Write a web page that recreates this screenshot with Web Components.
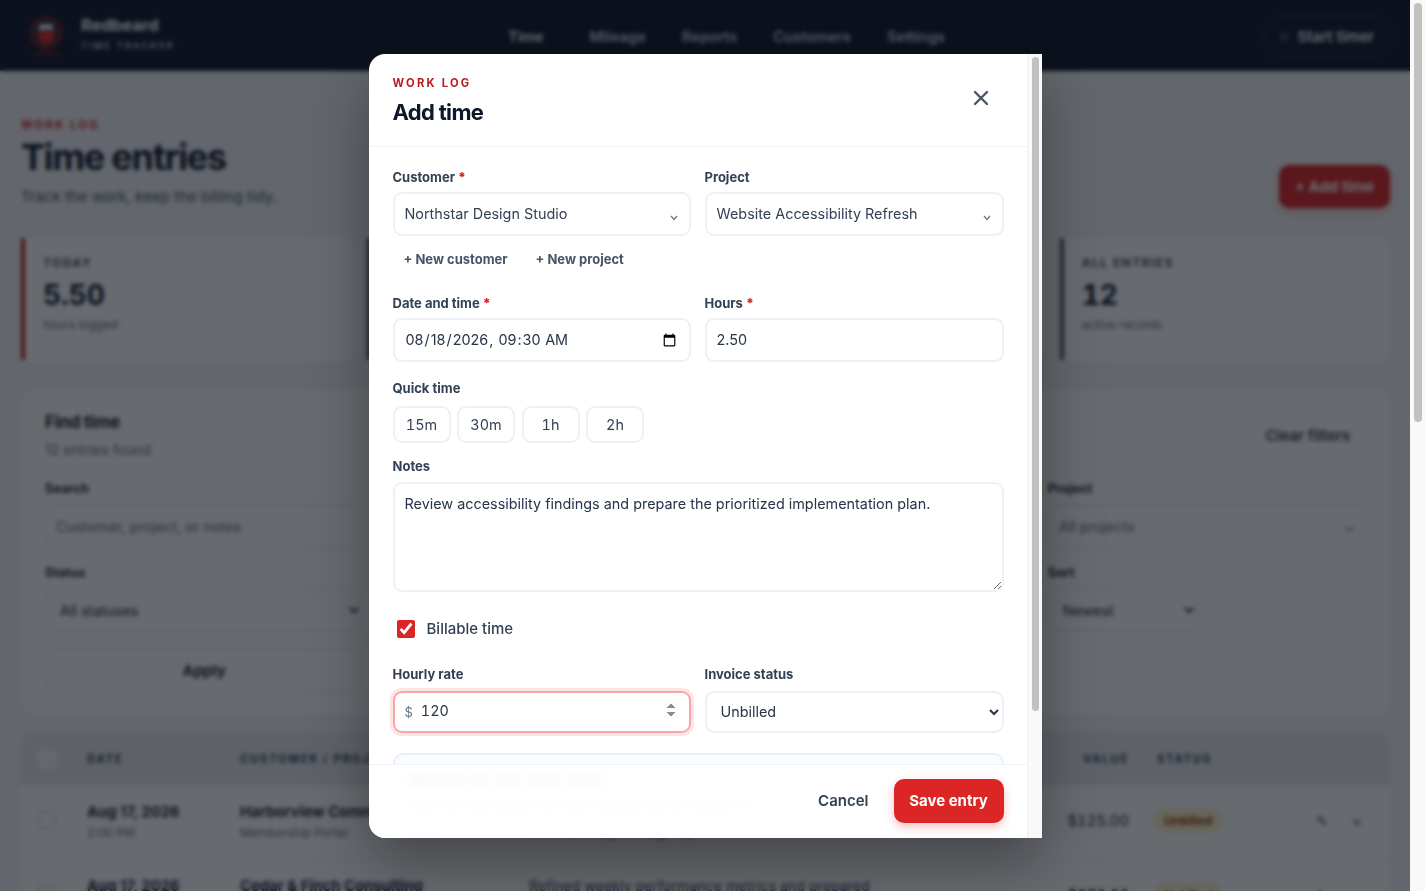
<!DOCTYPE html>
<html lang="en">
    <head>
        <meta charset="utf-8" />
        <title>Redbeard Time Tracker</title>
        <style>
            html, body {
                margin: 0;
                background: #f4f5f7;
                font-family: Inter, "Liberation Sans", sans-serif;
                color: #0f172a;
            }
            body { margin-right: 15px; }
            .page-scroll { position: fixed; top: 0; right: 0; bottom: 0; }
        </style>
    </head>
    <body>
        <app-nav></app-nav>
        <page-body>
            <page-title></page-title>
            <stat-row>
                <stat-card label="Today" value="5.50" note="hours logged" accent="#b91c1c"></stat-card>
                <stat-card label="This week" value="18.25" note="hours logged" accent="#334155"></stat-card>
                <stat-card label="Unbilled" value="$1,840" note="ready to invoice" accent="#d97706"></stat-card>
                <stat-card label="All entries" value="12" note="active records" accent="#475569"></stat-card>
            </stat-row>
            <filter-panel></filter-panel>
            <time-table></time-table>
        </page-body>
        <add-time-dialog></add-time-dialog>
        <fake-scrollbar class="page-scroll" top="3" size="419"></fake-scrollbar>

        <script>
            class FakeScrollbar extends HTMLElement {
                constructor() {
                    super();
                    this.attachShadow({ mode: "open" }).innerHTML = `<style>
                        :host { display: block; width: 15px; box-sizing: border-box; background: #f9f9fa; padding: ${this.getAttribute("top")}px 3px 0 4px; }
                        div { height: ${this.getAttribute("size")}px; background: #c1c1c1; border-radius: 4px; }
                    </style><div></div>`;
                }
            }

            class AppNav extends HTMLElement {
                constructor() {
                    super();
                    this.attachShadow({ mode: "open" }).innerHTML = `<style>
                        :host { display: flex; align-items: center; height: 71px; background: #0f172a; padding: 2px 20px 0 28px; box-sizing: border-box; color: #fff; }
                        .brand { display: flex; align-items: center; gap: 15px; width: 452px; margin-top: -8px; }
                        .name { font-size: 16.5px; font-weight: 700; line-height: 20px; }
                        .sub { font-size: 9px; font-weight: 600; letter-spacing: .25em; color: #cbd5e1; margin-top: 5px; }
                        nav { display: flex; gap: 36px; flex: 1; padding-left: 28px; }
                        nav a { font-size: 14.7px; font-weight: 600; color: #cbd5e1; }
                        nav a.on { color: #fff; margin-right: 10px; }
                        .timer { display: flex; align-items: center; gap: 9px; height: 41px; padding: 0 15px; border: 1px solid rgba(255,255,255,.14); border-radius: 21px; font-size: 15px; font-weight: 600; color: #f1f5f9; }
                        .dot { width: 6px; height: 6px; border: 1px solid #94a3b8; border-radius: 50%; }
                    </style>
                    <div class="brand">
                        <svg width="38" height="42" viewBox="0 0 38 42" style="margin-top:8px">
                            <circle cx="18" cy="17" r="15" fill="#1e293b" stroke="#b91c1c" stroke-width="2"/>
                            <path d="M9 15h18l-1 9-8 6-8-6z" fill="#dc2626"/>
                            <path d="M12 8h12l2 6H10z" fill="#e2e8f0"/>
                            <rect x="4" y="37" width="28" height="2" fill="#991b1b"/>
                        </svg>
                        <div><div class="name">Redbeard</div><div class="sub">TIME TRACKER</div></div>
                    </div>
                    <nav><a class="on">Time</a><a>Mileage</a><a>Reports</a><a>Customers</a><a>Settings</a></nav>
                    <div class="timer"><span class="dot"></span>Start timer</div>`;
                }
            }

            class PageBody extends HTMLElement {
                constructor() {
                    super();
                    this.attachShadow({ mode: "open" }).innerHTML = `<style>
                        :host { display: block; padding: 46px 20px 156px 21px; }
                    </style><slot></slot>`;
                }
            }

            class PageTitle extends HTMLElement {
                constructor() {
                    super();
                    this.attachShadow({ mode: "open" }).innerHTML = `<style>
                        :host { display: flex; justify-content: space-between; align-items: flex-end; height: 120px; box-sizing: border-box; padding-bottom: 30px; }
                        .eyebrow { font-size: 11.2px; font-weight: 700; letter-spacing: .2em; color: #dc2626; line-height: 14px; }
                        h1 { margin: 4px 0 9px; font-size: 36px; line-height: 42px; font-weight: 700; letter-spacing: -.035em; color: #0f172a; }
                        p { margin: 0; font-size: 15px; line-height: 20px; color: #475569; }
                        button { all: unset; height: 43px; width: 111px; margin-bottom: -1px; text-align: center; background: #dc2626; color: #fff; border-radius: 10px; font-size: 15px; font-weight: 700; box-shadow: 0 4px 10px rgba(220,38,38,.25); }
                    </style>
                    <div><div class="eyebrow">WORK LOG</div><h1>Time entries</h1><p>Track the work, keep the billing tidy.</p></div>
                    <button>+ Add time</button>`;
                }
            }

            class StatRow extends HTMLElement {
                constructor() {
                    super();
                    this.attachShadow({ mode: "open" }).innerHTML = `<style>
                        :host { display: grid; grid-template-columns: repeat(4, 1fr); gap: 16px; }
                    </style><slot></slot>`;
                }
            }

            class StatCard extends HTMLElement {
                constructor() {
                    super();
                    this.attachShadow({ mode: "open" }).innerHTML = `<style>
                        :host { display: flex; gap: 18px; height: 125px; box-sizing: border-box; background: #fff; border-radius: 12px; padding: 1px 0 2px; }
                        .bar { width: 4px; border-radius: 2px; background: ${this.getAttribute("accent")}; }
                        .body { padding-top: 17px; }
                        .label { font-size: 12px; font-weight: 700; letter-spacing: .12em; line-height: 16px; color: #475569; text-transform: uppercase; }
                        .value { font-size: 28px; font-weight: 700; font-variant-numeric: tabular-nums; line-height: 36px; margin-top: 6px; color: #0f172a; }
                        .note { font-size: 12px; line-height: 16px; margin-top: 4px; color: #64748b; }
                    </style>
                    <div class="bar"></div>
                    <div class="body">
                        <div class="label">${this.getAttribute("label")}</div>
                        <div class="value">${this.getAttribute("value")}</div>
                        <div class="note">${this.getAttribute("note")}</div>
                    </div>`;
                }
            }

            class FilterPanel extends HTMLElement {
                constructor() {
                    super();
                    this.attachShadow({ mode: "open" }).innerHTML = `<style>
                        :host { display: block; margin-top: 28px; height: 324px; box-sizing: border-box; background: #fff; border-radius: 14px; padding: 15px 24px; }
                        .top { display: flex; justify-content: space-between; align-items: center; height: 60px; }
                        h2 { margin: 0 0 7px; font-size: 17px; line-height: 22px; font-weight: 700; letter-spacing: -.01em; }
                        .count { font-size: 14px; line-height: 20px; color: #64748b; }
                        .clear { font-size: 15px; font-weight: 600; color: #334155; padding-right: 16px; }
                        .grid { display: grid; grid-template-columns: repeat(4, 1fr); column-gap: 16px; margin-top: 15px; }
                        .field { height: 84px; }
                        .wide { grid-column: span 3; }
                        label { display: block; font-size: 12.8px; font-weight: 700; line-height: 16px; margin-bottom: 8px; color: #1e293b; padding-top: 1px; }
                        .box { height: 43px; box-sizing: border-box; border: 1px solid #e2e8f0; border-radius: 8px; padding: 0 10px; display: flex; align-items: center; justify-content: space-between; font-size: 14.4px; color: #64748b; }
                        select { height: 43px; width: 100%; box-sizing: border-box; border: 1px solid #e2e8f0; border-radius: 8px; background: #fff; padding: 0 10px; font: inherit; font-size: 14.4px; color: #1e293b; }
                        .apply { height: 45px; box-sizing: border-box; border: 1px solid #e2e8f0; border-radius: 8px; display: flex; align-items: center; justify-content: center; font-size: 15px; font-weight: 700; color: #1e293b; }
                    </style>
                    <div class="top">
                        <div><h2>Find time</h2><div class="count">12 entries found</div></div>
                        <div class="clear">Clear filters</div>
                    </div>
                    <div class="grid">
                        <div class="field wide"><label>Search</label><div class="box">Customer, project, or notes</div></div>
                        <div class="field"><label>Project</label><div class="box">All projects<span>&#8964;</span></div></div>
                        <div class="field"><label>Status</label><select><option>All statuses</option></select></div>
                        <div class="field"><label>From</label><div class="box">mm/dd/yyyy</div></div>
                        <div class="field"><label>To</label><div class="box">mm/dd/yyyy</div></div>
                        <div class="field"><label>Sort</label><select style="width:150px"><option>Newest</option></select></div>
                        <div class="apply">Apply</div>
                    </div>`;
                }
            }

            const ROWS = [
                ["Aug 17, 2026", "2:00 PM", "Harborview Community Trust", "Membership Portal", "Reviewed membership portal content and drafted the", "renewal copy for sign-up", "$125.00"],
                ["Aug 17, 2026", "9:00 AM", "Cedar & Finch Consulting", "Quarterly Reporting", "Refined weekly performance metrics and prepared", "summary notes", "$270.00"],
                ["Aug 14, 2026", "1:15 PM", "Northstar Design Studio", "Website Accessibility Refresh", "Audited the navigation and form labels", "for screen readers", "$300.00"],
                ["Aug 13, 2026", "10:30 AM", "Harborview Community Trust", "Membership Portal", "Built the renewal reminder email", "and tested delivery", "$150.00"],
                ["Aug 12, 2026", "3:45 PM", "Cedar & Finch Consulting", "Quarterly Reporting", "Cleaned the export from the billing system", "for the review", "$90.00"],
                ["Aug 11, 2026", "8:30 AM", "Northstar Design Studio", "Website Accessibility Refresh", "Fixed contrast problems on the pricing page", "and footer", "$240.00"],
                ["Aug 10, 2026", "11:00 AM", "Harborview Community Trust", "Membership Portal", "Client call about the launch timeline", "and next steps", "$60.00"],
                ["Aug 7, 2026", "2:30 PM", "Cedar & Finch Consulting", "Quarterly Reporting", "Drafted the dashboard outline", "for the partners", "$180.00"],
                ["Aug 6, 2026", "9:15 AM", "Northstar Design Studio", "Website Accessibility Refresh", "Keyboard testing across the main templates", "and notes", "$210.00"],
                ["Aug 5, 2026", "4:00 PM", "Harborview Community Trust", "Membership Portal", "Migrated member records to staging", "and checked totals", "$120.00"],
                ["Aug 4, 2026", "10:00 AM", "Cedar & Finch Consulting", "Quarterly Reporting", "Kickoff meeting and data request", "for the quarter", "$95.00"],
                ["Aug 3, 2026", "1:00 PM", "Northstar Design Studio", "Website Accessibility Refresh", "Scoped the audit and set up tooling", "for the refresh", "$150.00"],
            ];

            class TimeTable extends HTMLElement {
                constructor() {
                    super();
                    const rows = ROWS.map((r) => `<div class="row">
                        <span class="check"></span>
                        <div><div class="main">${r[0]}</div><div class="sub">${r[1]}</div></div>
                        <div><div class="main">${r[2]}</div><div class="sub">${r[3]}</div></div>
                        <div class="notes">${r[4]}<br>${r[5]}</div>
                        <div class="money">${r[6]}</div>
                        <div class="status"><span class="badge">Unbilled</span></div>
                        <div class="acts"><span>&#9998;</span><span>&#215;</span></div>
                    </div>`).join("");
                    this.attachShadow({ mode: "open" }).innerHTML = `<style>
                        :host { display: block; margin-top: 18px; }
                        .head, .row { display: grid; grid-template-columns: 66px 153px 289px 531px 81px 16px 65px 1fr; align-items: start; }
                        .row > :nth-child(6) { grid-column: 7; }
                        .row > :nth-child(7) { grid-column: 8; }
                        .head > :nth-child(6) { grid-column: 7 / 9; }
                        .head { height: 53px; align-items: center; background: #e8eaed; border-radius: 14px 14px 0 0; font-size: 11.2px; font-weight: 700; letter-spacing: .16em; color: #334155; }
                        .head .check { border-color: #fff; background: #f7f8f9; }
                        .row { height: 74px; padding-top: 16px; background: #fff; border-top: 1px solid #eef1f5; box-sizing: border-box; }
                        .check { display: block; width: 18px; height: 18px; box-sizing: border-box; margin-left: 17px; border: 2px solid #e2e8f0; border-radius: 3px; background: #fff; }
                        .row .check { margin-top: 9px; }
                        .main { font-size: 14.8px; font-weight: 700; line-height: 20px; color: #1e293b; white-space: nowrap; }
                        .sub { font-size: 12px; line-height: 16px; margin-top: 3px; color: #64748b; white-space: nowrap; }
                        .notes { font-size: 14.2px; line-height: 20px; color: #334155; }
                        .money { font-size: 14.8px; font-variant-numeric: tabular-nums; line-height: 20px; margin-top: 9px; text-align: right; color: #1e293b; padding-right: 12px; }
                        .status { margin-top: 7px; margin-left: -3px; }
                        .badge { display: inline-block; padding: 3px 10px; border-radius: 12px; font-size: 12px; font-weight: 700; line-height: 17px; background: #fef3c7; color: #92400e; white-space: nowrap; }
                        .acts { display: flex; gap: 24px; margin-top: 9px; line-height: 20px; padding-left: 94px; font-size: 14px; color: #475569; }
                        .pager { height: 65px; background: #fff; border-radius: 0 0 14px 14px; border-top: 1px solid #eef1f5; display: flex; align-items: center; padding: 0 24px; font-size: 13px; color: #64748b; }
                    </style>
                    <div class="head"><span class="check"></span><span>DATE</span><span>CUSTOMER / PROJECT</span><span>NOTES</span><span style="text-align:right;padding-right:12px">VALUE</span><span>STATUS</span></div>
                    ${rows}
                    <div class="pager">Showing 12 of 12 entries</div>`;
                }
            }

            class FormField extends HTMLElement {
                constructor() {
                    super();
                    const star = this.hasAttribute("required") ? ` <b>*</b>` : "";
                    this.attachShadow({ mode: "open" }).innerHTML = `<style>
                        :host { display: block; min-width: 0; }
                        .label { font-size: 13px; font-weight: 700; line-height: 16px; color: #334155; margin-bottom: var(--label-gap, 7px); }
                        b { color: #dc2626; }
                    </style>
                    <div class="label">${this.getAttribute("label")}${star}</div>
                    <slot></slot>`;
                }
            }

            class AddTimeDialog extends HTMLElement {
                constructor() {
                    super();
                    this.attachShadow({ mode: "open" }).innerHTML = `<style>
                        :host { position: fixed; top: 0; left: 0; right: 15px; bottom: 0; display: flex; align-items: center; justify-content: center; background: rgba(10, 14, 23, .62); backdrop-filter: blur(2px); color: #0f172a; }
                        .panel { display: flex; width: 673px; height: 88vh; margin-top: 1px; overflow: hidden; background: #fff; border-radius: 16px 0 0 16px; box-shadow: 0 25px 60px rgba(0,0,0,.35); box-sizing: border-box; }
                        .scroll { flex: 1; min-width: 0; overflow: hidden; }
                        fake-scrollbar { flex: none; border-left: 1px solid #eff0f2; }
                        header { display: flex; justify-content: space-between; align-items: flex-start; height: 93px; box-sizing: border-box; padding: 22px 24px 0; border-bottom: 1px solid #f0f2f5; }
                        .eyebrow { font-size: 11.2px; font-weight: 700; letter-spacing: .2em; line-height: 14px; color: #b91c1c; }
                        h2 { margin: 8px 0 0; font-size: 22px; line-height: 28px; font-weight: 700; letter-spacing: -.03em; color: #0f172a; }
                        .close { all: unset; display: block; margin: 14px 14px 0 0; width: 16px; height: 16px; }
                        form { display: block; padding: 22px 23px 24px 24px; }
                        .two { display: grid; grid-template-columns: 298px 299px; column-gap: 14px; }
                        input, select, textarea { font: inherit; font-size: 14.4px; color: #273449; box-sizing: border-box; width: 100%; background: #fff; border: 2px solid #edf0f5; border-radius: 9px; outline: none; }
                        input, select { height: 44px; padding: 0 10px; }
                        .combo { position: relative; }
                        .combo select { appearance: none; color: #334155; padding: 0 28px 0 10px; }
                        .combo svg { position: absolute; right: 13px; top: 23px; }
                        .links { display: flex; gap: 28px; padding: 15px 11px 0; height: 59px; box-sizing: border-box; font-size: 13px; font-weight: 700; line-height: 16px; color: #475569; }
                        .quick-wrap { margin-top: 18px; --label-gap: 10px; }
                        .quick { display: flex; gap: 6.5px; }
                        .quick button { all: unset; width: 58px; height: 37px; box-sizing: border-box; text-align: center; font-size: 14.4px; font-variant-numeric: tabular-nums; line-height: 33px; color: #334155; border: 2px solid #edf0f5; border-radius: 9px; }
                        .notes-wrap { margin-top: 15px; --label-gap: 8px; }
                        textarea { display: block; height: 110px; padding: 10px; line-height: 20px; resize: vertical; }
                        .bill { display: flex; align-items: center; gap: 12px; margin: 27px 0 0 4px; height: 20px; font-size: 15px; font-weight: 500; color: #334155; }
                        .bill input { width: 18px; height: 18px; margin: 0; accent-color: #dc2626; }
                        .rates { margin-top: 27px; --label-gap: 9px; }
                        .rates select { height: 42px; }
                        .money { display: flex; align-items: center; height: 42px; box-sizing: border-box; padding: 0 10px; gap: 8px; border: 2px solid #fca5a5; border-radius: 9px; box-shadow: 0 0 0 3px rgba(220,38,38,.12); font-size: 13px; color: #64748b; }
                        .money input { border: 0; height: 36px; padding: 0 0 3px; border-radius: 0; font-variant-numeric: tabular-nums; }
                        .money input::-webkit-inner-spin-button { opacity: 1; }
                        .invoice { padding-left: 10px; }
                        .mileage { margin-top: 20px; height: 140px; box-sizing: border-box; padding: 15px 14px; border: 2px solid #e8f0fb; border-radius: 10px; background: #f9fbfe; }
                        .mileage h3 { margin: 0; font-size: 15px; font-weight: 700; line-height: 20px; color: #0f172a; }
                        .mileage p { margin: 6px 0 0; font-size: 13px; line-height: 16px; color: #475569; }
                        footer { position: sticky; bottom: 0; display: flex; justify-content: flex-end; align-items: center; gap: 25px; height: 74px; box-sizing: border-box; padding: 0 23px 2px 24px; background: rgba(255,255,255,.96); backdrop-filter: blur(4px); border-top: 1px solid #f0f2f5; }
                        .cancel { font-size: 15px; font-weight: 600; color: #334155; }
                        .save { all: unset; width: 110px; height: 44px; text-align: center; line-height: 44px; font-size: 15px; font-weight: 700; color: #fff; background: #dc2626; border-radius: 10px; box-shadow: 0 4px 10px rgba(220,38,38,.28); }
                    </style>
                    <div class="panel">
                        <div class="scroll">
                            <header>
                                <div><div class="eyebrow">WORK LOG</div><h2>Add time</h2></div>
                                <button class="close" aria-label="Close"><svg width="16" height="16" viewBox="0 0 16 16"><path d="M2 2l12 12M14 2L2 14" stroke="#475569" stroke-width="2.4" stroke-linecap="round"/></svg></button>
                            </header>
                            <form>
                                <div class="two">
                                    <form-field label="Customer" required><div class="combo"><select><option>Northstar Design Studio</option></select><svg width="8" height="6" viewBox="0 0 8 6"><path d="M1 1l3 3.5L7 1" fill="none" stroke="#64748b" stroke-width="1.2"/></svg></div></form-field>
                                    <form-field label="Project"><div class="combo"><select><option>Website Accessibility Refresh</option></select><svg width="8" height="6" viewBox="0 0 8 6"><path d="M1 1l3 3.5L7 1" fill="none" stroke="#64748b" stroke-width="1.2"/></svg></div></form-field>
                                </div>
                                <div class="links"><span>+ New customer</span><span>+ New project</span></div>
                                <div class="two">
                                    <form-field label="Date and time" required><input type="datetime-local" value="2026-08-18T09:30"></form-field>
                                    <form-field label="Hours" required><input type="text" value="2.50"></form-field>
                                </div>
                                <form-field class="quick-wrap" label="Quick time"><div class="quick"><button type="button">15m</button><button type="button">30m</button><button type="button">1h</button><button type="button">2h</button></div></form-field>
                                <form-field class="notes-wrap" label="Notes"><textarea>Review accessibility findings and prepare the prioritized implementation plan.</textarea></form-field>
                                <label class="bill"><input type="checkbox" checked>Billable time</label>
                                <div class="two rates">
                                    <form-field label="Hourly rate"><div class="money"><span>$</span><input type="number" value="120"></div></form-field>
                                    <form-field label="Invoice status"><select class="invoice"><option>Unbilled</option></select></form-field>
                                </div>
                                <div class="mileage"><h3>Mileage for this work entry</h3><p>Save the time entry first, then mileage can be linked to it.</p></div>
                            </form>
                            <footer><span class="cancel">Cancel</span><button class="save" type="button">Save entry</button></footer>
                        </div>
                        <fake-scrollbar top="3" size="654"></fake-scrollbar>
                    </div>`;
                }
            }

            customElements.define("fake-scrollbar", FakeScrollbar);
            customElements.define("app-nav", AppNav);
            customElements.define("page-body", PageBody);
            customElements.define("page-title", PageTitle);
            customElements.define("stat-row", StatRow);
            customElements.define("stat-card", StatCard);
            customElements.define("filter-panel", FilterPanel);
            customElements.define("time-table", TimeTable);
            customElements.define("form-field", FormField);
            customElements.define("add-time-dialog", AddTimeDialog);
        </script>
    </body>
</html>
